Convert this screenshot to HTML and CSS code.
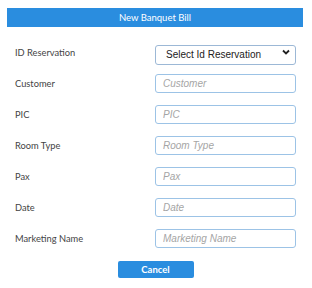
FILE: index.html
```html
<!DOCTYPE html>
<html lang="en">
<head>
    <meta charset="UTF-8">
    <meta name="viewport" content="width=device-width, initial-scale=1.0">
    <title>New Banquet Bill</title>
    <link rel="stylesheet" href="styles.css">
</head>
<body>
    <div class="bill-container">
        <div class="bill-header">New Banquet Bill</div>

        <!-- form rows -->
        <form class="bill-form">
            <div class="form-row">
                <label for="reservation">ID Reservation</label>
                <div class="select-wrap">
                    <select id="reservation" class="select-field">
                        <option>Select Id Reservation</option>
                    </select>
                    <svg class="select-arrow" width="8" height="6" viewBox="0 0 8 6">
                        <path d="M1 1.5 L4 4.5 L7 1.5" fill="none" stroke="#222" stroke-width="1.8"/>
                    </svg>
                </div>
            </div>
            <div class="form-row">
                <label for="customer">Customer</label>
                <input type="text" id="customer" class="input-field" placeholder="Customer">
            </div>
            <div class="form-row">
                <label for="pic">PIC</label>
                <input type="text" id="pic" class="input-field" placeholder="PIC">
            </div>
            <div class="form-row">
                <label for="roomType">Room Type</label>
                <input type="text" id="roomType" class="input-field" placeholder="Room Type">
            </div>
            <div class="form-row">
                <label for="pax">Pax</label>
                <input type="text" id="pax" class="input-field" placeholder="Pax">
            </div>
            <div class="form-row">
                <label for="date">Date</label>
                <input type="text" id="date" class="input-field" placeholder="Date">
            </div>
            <div class="form-row">
                <label for="marketing">Marketing Name</label>
                <input type="text" id="marketing" class="input-field" placeholder="Marketing Name">
            </div>

            <div class="form-actions">
                <button type="button" class="cancel-button">Cancel</button>
            </div>
        </form>
    </div>
</body>
</html>
```

FILE: styles.css
```css
* {
    margin: 0;
    padding: 0;
    box-sizing: border-box;
}

body {
    font-family: 'Lato', 'Liberation Sans', sans-serif;
    background-color: #fff;
    color: #333;
}

.bill-container {
    margin: 8px 9px 0 7px;
}

/* 顶部蓝色标题栏 */
.bill-header {
    background-color: #2a8ddf;
    color: #fff;
    font-size: 9.5px;
    height: 19px;
    line-height: 19px;
    text-align: center;
}

.bill-form {
    display: flex;
    flex-direction: column;
    gap: 11px;
    padding: 15px 7px 0 8px;
}

.form-row {
    display: grid;
    grid-template-columns: 1fr 141px;
    align-items: center;
    height: 20px;
}

.form-row label {
    font-size: 9.3px;
    color: #444;
}

.input-field {
    width: 100%;
    height: 19px;
    border: 1px solid #9cc3e6;
    border-radius: 3px;
    padding: 0 7px;
    font-family: 'Liberation Sans', Arial, sans-serif;
    font-size: 10px;
    color: #333;
    outline: none;
}

.input-field::placeholder {
    color: #a5a5a5;
    font-style: italic;
}

/* 下拉框 */
.select-wrap {
    position: relative;
    height: 20px;
}

.select-field {
    appearance: none;
    -webkit-appearance: none;
    width: 100%;
    height: 20px;
    border: 1px solid #9cb8d6;
    border-radius: 3px;
    background: #fff;
    padding: 0 0 0 10px;
    font-family: 'Liberation Sans', Arial, sans-serif;
    font-size: 10px;
    color: #222;
    outline: none;
}

.select-arrow {
    position: absolute;
    right: 6px;
    top: 7px;
}

.form-actions {
    display: flex;
    justify-content: center;
    margin-top: 2px;
}

.cancel-button {
    width: 76px;
    height: 17px;
    background-color: #2a8ddf;
    color: #fff;
    border: none;
    border-radius: 2px;
    font-family: 'Lato', sans-serif;
    font-weight: bold;
    font-size: 9.5px;
    cursor: pointer;
}
```
